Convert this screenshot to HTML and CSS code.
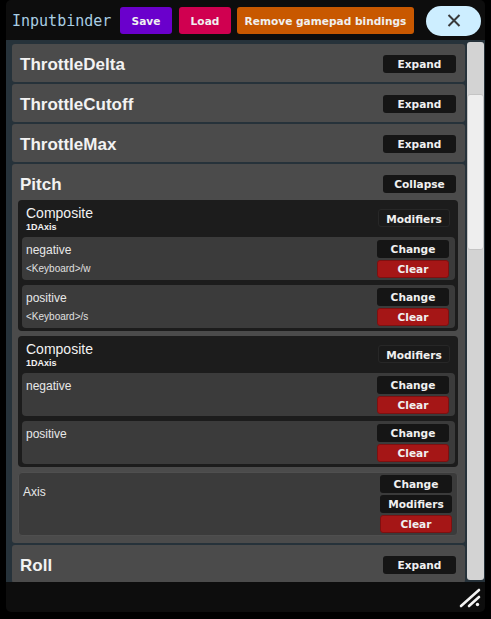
FILE: index.html
```html
<!DOCTYPE html>
<html lang="en">
<head>
<meta charset="utf-8">
<title>Inputbinder</title>
<link rel="stylesheet" href="styles.css">
</head>
<body>
<div class="window">
  <div class="header">
    <span class="app-title">Inputbinder</span>
    <button class="hbtn save">Save</button>
    <button class="hbtn load">Load</button>
    <button class="hbtn remove">Remove gamepad bindings</button>
    <button class="close" aria-label="Close">
      <svg width="14" height="13" viewBox="0 0 14 13"><path d="M1.5 1 L12.5 12 M12.5 1 L1.5 12" stroke="#3a3a3a" stroke-width="2" fill="none"/></svg>
    </button>
  </div>
  <div class="body">
    <div class="list">
      <div class="action">
        <div class="action-head"><span class="action-name">ThrottleDelta</span><button class="btn">Expand</button></div>
      </div>
      <div class="action">
        <div class="action-head"><span class="action-name">ThrottleCutoff</span><button class="btn">Expand</button></div>
      </div>
      <div class="action">
        <div class="action-head"><span class="action-name">ThrottleMax</span><button class="btn">Expand</button></div>
      </div>
      <div class="action open">
        <div class="action-head short"><span class="action-name">Pitch</span><button class="btn">Collapse</button></div>
        <div class="composite">
          <div class="comp-head">
            <div class="comp-titles"><div class="comp-name">Composite</div><div class="comp-type">1DAxis</div></div>
            <button class="btn outline">Modifiers</button>
          </div>
          <div class="part">
            <div class="part-text"><div class="part-name">negative</div><div class="part-path">&lt;Keyboard&gt;/w</div></div>
            <div class="btn-col"><button class="btn">Change</button><button class="btn clear">Clear</button></div>
          </div>
          <div class="part">
            <div class="part-text"><div class="part-name">positive</div><div class="part-path">&lt;Keyboard&gt;/s</div></div>
            <div class="btn-col"><button class="btn">Change</button><button class="btn clear">Clear</button></div>
          </div>
        </div>
        <div class="composite">
          <div class="comp-head">
            <div class="comp-titles"><div class="comp-name">Composite</div><div class="comp-type">1DAxis</div></div>
            <button class="btn outline">Modifiers</button>
          </div>
          <div class="part">
            <div class="part-text"><div class="part-name">negative</div></div>
            <div class="btn-col"><button class="btn">Change</button><button class="btn clear">Clear</button></div>
          </div>
          <div class="part">
            <div class="part-text"><div class="part-name">positive</div></div>
            <div class="btn-col"><button class="btn">Change</button><button class="btn clear">Clear</button></div>
          </div>
        </div>
        <div class="binding">
          <div class="binding-name">Axis</div>
          <div class="btn-col"><button class="btn">Change</button><button class="btn">Modifiers</button><button class="btn clear">Clear</button></div>
        </div>
      </div>
      <div class="action">
        <div class="action-head"><span class="action-name">Roll</span><button class="btn">Expand</button></div>
      </div>
    </div>
    <div class="scrollbar"><div class="thumb"></div></div>
  </div>
  <div class="footer">
    <svg class="resize" width="24" height="22" viewBox="0 0 24 22">
      <path d="M2 19 L20 3 M10 19 L20 10" stroke="#f2f2f2" stroke-width="2.6" stroke-linecap="round" fill="none"/>
      <circle cx="18.5" cy="17.5" r="1.7" fill="#f2f2f2"/>
    </svg>
  </div>
</div>
</body>
</html>
```

FILE: styles.css
```css
* { box-sizing: border-box; }
html, body { margin: 0; padding: 0; background: #000; }
body { width: 491px; height: 619px; overflow: hidden; font-family: "Liberation Sans", Arial, sans-serif; }

.window {
  margin-left: 6px;
  width: 479px;
  height: 612px;
  background: #0d0d0d;
  border-radius: 5px;
  overflow: hidden;
  display: flex;
  flex-direction: column;
}

.header {
  height: 40px;
  padding: 1px 0 0 6px;
  display: flex;
  align-items: center;
  flex-shrink: 0;
}
.app-title {
  font-family: "DejaVu Sans Mono", monospace;
  font-size: 15px;
  color: #a9cde3;
  width: 108px;
}
button {
  border: none;
  padding: 0;
  cursor: pointer;
  font-family: "DejaVu Sans", sans-serif;
  font-weight: bold;
  color: #f0f0f0;
}
.hbtn {
  height: 27px;
  border-radius: 3px;
  font-size: 10.6px;
}
.save { width: 52px; background: #6a00cc; }
.load { width: 52px; margin-left: 7px; background: #d00050; }
.remove { width: 177px; margin-left: 6px; background: #c85800; }
.close {
  width: 55px;
  height: 30px;
  margin-left: 12px;
  border-radius: 15px;
  background: #cdeeff;
  display: flex;
  align-items: center;
  justify-content: center;
}

.body {
  height: 542px;
  flex-shrink: 0;
  background: #26323a;
  display: flex;
  padding: 0 1px 0 6px;
}
.list {
  width: 453px;
  height: 542px;
  padding-top: 4px;
  overflow: hidden;
  display: flex;
  flex-direction: column;
  gap: 2px;
}
.action {
  background: #4b4b4b;
  border-radius: 3px;
  flex-shrink: 0;
}
.action.open { padding: 0 7px 7px 6px; }
.action-head {
  height: 38px;
  padding: 0 9px 0 8px;
  display: flex;
  align-items: flex-start;
  justify-content: space-between;
}
.action.open .action-head { height: 36px; padding: 0 2px 0 2px; }
.action-name {
  margin-top: 11px;
  font-size: 17px;
  line-height: 20px;
  font-weight: bold;
  color: #f2f2f2;
}
.btn {
  width: 73px;
  height: 18px;
  margin-top: 11px;
  border-radius: 3px;
  background: #151515;
  font-size: 10.6px;
  line-height: 18px;
}

.composite {
  background: #1c1c1c;
  border-radius: 4px;
  height: 131px;
  padding: 0 3px 3px 4px;
  display: flex;
  flex-direction: column;
  gap: 5px;
}
.composite + .composite, .composite + .binding { margin-top: 5px; }
.comp-head {
  height: 37px;
  margin-bottom: -5px;
  padding: 0 5px 0 4px;
  display: flex;
  justify-content: space-between;
  align-items: flex-start;
}
.comp-name {
  margin-top: 5px;
  font-size: 14px;
  line-height: 16px;
  color: #f2f2f2;
}
.comp-type {
  margin-top: 1px;
  font-size: 9px;
  line-height: 10px;
  font-weight: bold;
  color: #f2f2f2;
}
.btn.outline {
  width: 72px;
  margin-top: 9px;
  background: #1a1a1a;
  border: 1px solid #272727;
}
.part {
  height: 43px;
  background: #3b3b3b;
  border-radius: 4px;
  padding: 3px 6px 2px 4px;
  display: flex;
  justify-content: space-between;
}
.part-text { padding-top: 3px; }
.part-name {
  font-size: 12px;
  line-height: 14px;
  color: #e8e8e8;
}
.part-path {
  margin-top: 6px;
  font-size: 10px;
  line-height: 12px;
  color: #e0e0e0;
}
.btn-col {
  display: flex;
  flex-direction: column;
  gap: 2px;
}
.btn-col .btn { width: 72px; margin-top: 0; }
.btn.clear { background: #a51616; border: 1px solid #7e1010; line-height: 16px; }

.binding {
  height: 64px;
  background: #3b3b3b;
  border: 1px solid #4f4f4f;
  border-radius: 4px;
  padding: 2px 5px 2px 4px;
  display: flex;
  justify-content: space-between;
}
.binding-name {
  padding-top: 10px;
  font-size: 12px;
  line-height: 14px;
  color: #e8e8e8;
}

.scrollbar {
  width: 17px;
  margin: 2px 0 2px 2px;
  background: #d3d3d3;
  border-radius: 3px;
  overflow: hidden;
}
.thumb {
  margin-top: 52px;
  height: 156px;
  background: #eeeeee;
  border: 1px solid #c4c4c4;
  border-radius: 3px;
}

.footer {
  height: 30px;
  flex-shrink: 0;
  display: flex;
  justify-content: flex-end;
  align-items: flex-start;
  padding: 5px 2px 0 0;
}
```
